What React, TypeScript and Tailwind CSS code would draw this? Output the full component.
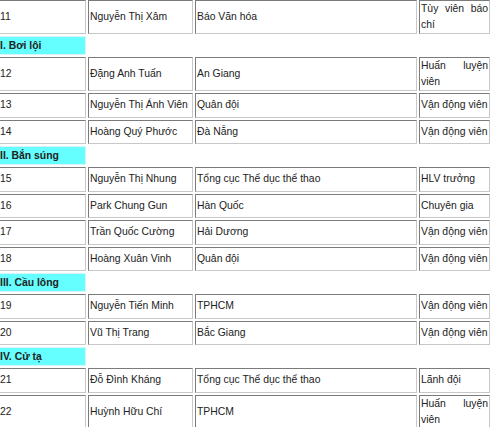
import React from "react";

type Row = string[] | string;

const rows: Row[] = [
  ["11", "Nguyễn Thị Xâm", "Báo Văn hóa", "Tùy viên báo chí"],
  "I. Bơi lội",
  ["12", "Đặng Anh Tuấn", "An Giang", "Huấn luyện viên"],
  ["13", "Nguyễn Thị Ánh Viên", "Quân đội", "Vận động viên"],
  ["14", "Hoàng Quý Phước", "Đà Nẵng", "Vận động viên"],
  "II. Bắn súng",
  ["15", "Nguyễn Thị Nhung", "Tổng cục Thể dục thể thao", "HLV trưởng"],
  ["16", "Park Chung Gun", "Hàn Quốc", "Chuyên gia"],
  ["17", "Trần Quốc Cường", "Hải Dương", "Vận động viên"],
  ["18", "Hoàng Xuân Vinh", "Quân đội", "Vận động viên"],
  "III. Cầu lông",
  ["19", "Nguyễn Tiến Minh", "TPHCM", "Vận động viên"],
  ["20", "Vũ Thị Trang", "Bắc Giang", "Vận động viên"],
  "IV. Cử tạ",
  ["21", "Đỗ Đình Kháng", "Tổng cục Thể dục thể thao", "Lãnh đội"],
  ["22", "Huỳnh Hữu Chí", "TPHCM", "Huấn luyện viên"],
];

const cell =
  "border border-t-[#7b7b7b] border-l-[#7b7b7b] border-r-[#c8c8c8] border-b-[#c8c8c8] px-[1px] py-0 align-middle text-justify h-[24.5px]";

export default function App() {
  return (
    <div
      className="w-[490px] h-[427px] overflow-hidden bg-white text-[#222]"
      style={{ fontFamily: '"Liberation Sans", Arial, sans-serif' }}
    >
      <table className="table-fixed border-separate border-spacing-[2px] w-[496px] ml-[-4px] mt-[-2px] text-[10.4px] leading-[16px]">
        <colgroup>
          <col className="w-[88px]" />
          <col className="w-[105px]" />
          <col className="w-[222px]" />
          <col className="w-[71px]" />
        </colgroup>
        <tbody>
          {rows.map((r, i) =>
            typeof r === "string" ? (
              <tr key={i}>
                <td className="h-[19px] bg-[#66ffff] font-bold px-[1px] py-0 align-middle border border-[#d8f4f4]">
                  {r}
                </td>
              </tr>
            ) : (
              <tr key={i}>
                {r.map((c, j) => (
                  <td key={j} className={cell}>
                    {c}
                  </td>
                ))}
              </tr>
            )
          )}
        </tbody>
      </table>
    </div>
  );
}
